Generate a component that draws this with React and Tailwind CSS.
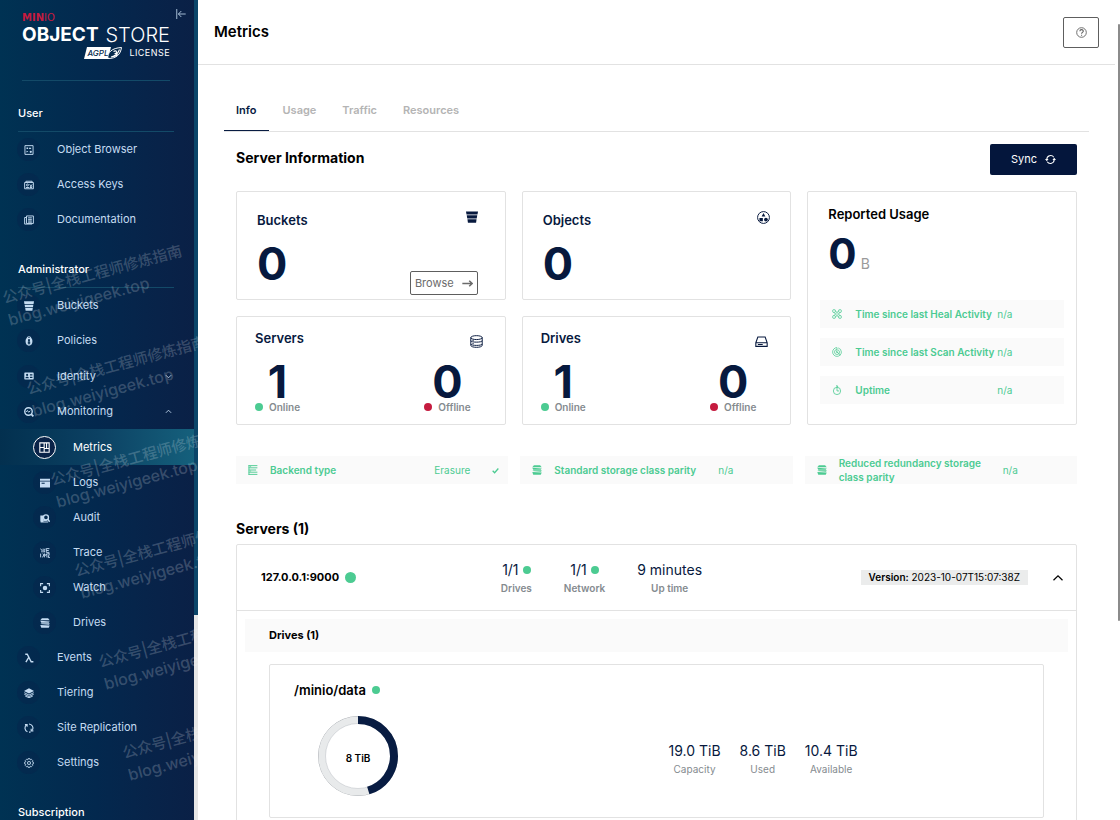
import React from "react";

const Svg = ({ size = 10, box = 16, className = "", children }) => (
  <svg
    width={size}
    height={size}
    viewBox={`0 0 ${box} ${box}`}
    fill="none"
    stroke="currentColor"
    strokeWidth="1.5"
    aria-hidden="true"
    className={`shrink-0 ${className}`}
  >
    {children}
  </svg>
);

const BucketIcon = (p) => (
  <Svg {...p}>
    <g fill="currentColor" stroke="none">
      <path d="M0 .5h16l-.7 4.300H.7z" />
      <path d="M1 5.800h14l-.7 4.200H1.700z" />
      <path d="M1.900 11h12.200l-.7 4.500H2.600z" />
    </g>
  </Svg>
);
const BrowserIcon = (p) => (
  <Svg {...p}>
    <path d="M1.500 1h13v14h-13z" />
    <g fill="currentColor" stroke="none">
      <path d="M4 4h2.500v2.500H4zM9.500 3.500l2.500 3H7.500zM4 9l3 1.500L4 12z" />
      <circle cx="10.800" cy="10.800" r="1.800" />
    </g>
  </Svg>
);
const AccessIcon = (p) => (
  <Svg {...p}>
    <path d="M1 4h14v10H1zM3 4V2h10v2" />
    <circle cx="5.500" cy="8" r="1.600" />
    <path d="M3 12h5M9 7l4 4M13 7l-3 4M9 12h4" />
  </Svg>
);
const DocsIcon = (p) => (
  <Svg {...p}>
    <path d="M4 1.500h11v12H4zM4 4H1v10.500h12M6.500 4.500h6M6.500 7h6M6.500 9.500h6M6.500 11.500h6" />
  </Svg>
);
const PolicyIcon = (p) => (
  <Svg {...p}>
    <path
      fill="currentColor"
      stroke="none"
      fillRule="evenodd"
      d="M8 .5c2 0 3.300 1.200 3.600 2.800C13 4.500 13.500 6.500 13.500 8.500c0 4-2 7-5.500 7s-5.500-3-5.500-7c0-2 .5-4 1.900-5.200C4.700 1.700 6 .5 8 .5zM8 2c-1 0-1.700.5-2 1.200h4C9.700 2.500 9 2 8 2zM8 5a1.600 1.600 0 0 0-1 2.900v1.400H6v1.500h1v1H6v1.500h4v-1.500H9v-1h1V9.300H9V7.900A1.600 1.600 0 0 0 8 5z"
    />
  </Svg>
);
const IdentityIcon = (p) => (
  <Svg {...p}>
    <path
      fill="currentColor"
      stroke="none"
      fillRule="evenodd"
      d="M1.500 2.500h13a1 1 0 0 1 1 1v9a1 1 0 0 1-1 1h-13a1 1 0 0 1-1-1v-9a1 1 0 0 1 1-1zM5 4.500a1.700 1.700 0 1 0 0 3.400 1.700 1.700 0 0 0 0-3.400zM2.300 11.500h5.400c0-3-5.400-3-5.400 0zM9.500 5v2h4V5zM9.500 9v2h4V9z"
    />
  </Svg>
);
const MonitoringIcon = (p) => (
  <Svg {...p}>
    <circle cx="7.200" cy="7.200" r="6" strokeWidth="2.200" />
    <path d="M11.500 11.500l3.500 3.500" strokeWidth="3" />
    <path d="M3.500 8l2-2.500 2 3L10 6" />
  </Svg>
);
const MetricsIcon = (p) => (
  <Svg {...p}>
    <path d="M1.200 1.200h13.600v13.600H1.200zM7.500 1.200v13.600M1.200 8h6.300M7.500 9.500h7.300M11 1.200v8.300" strokeWidth="1.600" />
  </Svg>
);
const LogsIcon = (p) => (
  <Svg {...p}>
    <path fill="currentColor" stroke="none" fillRule="evenodd" d="M0 1h16v3.200H0zM0 5.500h16V15H0zM2.500 7.500v1.500h5V7.500z" />
  </Svg>
);
const AuditIcon = (p) => (
  <Svg {...p}>
    <path fill="currentColor" stroke="none" d="M0.500 4h5v9.500h-5zM1 13.500h12V15H1z" />
    <circle cx="9.500" cy="7" r="4" strokeWidth="2.200" />
    <path d="M12.500 10l3 4" strokeWidth="2.400" />
    <path d="M5 12h6" />
  </Svg>
);
const TraceIcon = (p) => (
  <Svg {...p}>
    <path
      d="M1 1l2 3v3M5 1v6M8 1l-1 3v3M10 1v6h5M10 4h4M10 1h5M1 9v6M4 9l2 2-2 4M7 15V9l2 3 2-3v6M12 9h3l-2 6h3"
      strokeWidth="1.500"
    />
  </Svg>
);
const WatchIcon = (p) => (
  <Svg {...p}>
    <path d="M1 5V1h4M11 1h4v4M15 11v4h-4M5 15H1v-4" strokeWidth="1.800" />
    <circle cx="8" cy="8" r="3.600" fill="currentColor" stroke="none" />
  </Svg>
);
const DrivesStackIcon = (p) => (
  <Svg {...p}>
    <g fill="currentColor" stroke="none">
      <path d="M3 .5h10l2.500 3H.5z" />
      <path d="M.5 4.500l15 1-1.500 2H2z" />
      <path d="M3 8.300h12.500l-1 2.500L.5 9.500z" />
      <path d="M.5 11.300l15 .7-1.500 3.500H2z" />
    </g>
  </Svg>
);
const LambdaIcon = (p) => (
  <Svg {...p}>
    <path d="M2 2h3.200l6.300 12H15M7.600 7L3 14.500" strokeWidth="2.200" />
  </Svg>
);
const TieringIcon = (p) => (
  <Svg {...p}>
    <path d="M8 .5l8 4.200-8 4.200-8-4.200z" fill="currentColor" stroke="none" />
    <path d="M.5 7.500L8 11.300l7.500-3.800M.5 10L8 13.700l7.500-3.700M2 13l6 2.500 6-2.500" />
  </Svg>
);
const ReplicationIcon = (p) => (
  <Svg {...p}>
    <path
      d="M5.500 14A6.500 6.500 0 0 1 4 3M1.500 2.500H5v3.500M8 1.500a6.500 6.500 0 0 1 5.500 9.500M15 12.500h-3.500V9M8 14.500h2.500"
      strokeWidth="1.800"
    />
  </Svg>
);
const SettingsIcon = (p) => (
  <Svg {...p}>
    <path
      d="M6.500 1h3l.5 2 1.800-1 2.100 2.100L13 6l2 .5v3l-2 .5.900 1.900-2.100 2.100-1.800-1-.5 2h-3L6 13l-1.900 1L2 11.900 3 10l-2-.5v-3L3 6 2 4.100 4.100 2 6 3z"
      strokeWidth="1.300"
    />
    <circle cx="8" cy="8" r="2.600" strokeWidth="1.300" />
    <circle cx="8" cy="8" r="0.500" fill="currentColor" strokeWidth="0.500" />
  </Svg>
);
const Chevron = ({ up, size = 7, thin }) => (
  <Svg size={size}>
    <path d={up ? "M2 11l6-6 6 6" : "M2 5l6 6 6-6"} strokeWidth={thin ? "1.600" : "2"} />
  </Svg>
);
const CollapseIcon = () => (
  <Svg size={10}>
    <path d="M1.200 0v16M15.500 8H4M8.500 3.200L3.800 8l4.700 4.800" strokeWidth="1.300" />
  </Svg>
);
const HelpIcon = () => (
  <Svg size={11}>
    <circle cx="8" cy="8" r="7" strokeWidth="1.300" />
    <path d="M5.600 6.300c0-3.400 5-3.200 5-.2 0 1.700-2.500 1.900-2.500 3.700M8.100 11.200v1.500" />
  </Svg>
);
const SyncIcon = () => (
  <Svg size={11}>
    <path d="M2.600 8A5.600 5.600 0 0 1 12.800 4.800M13.400 8A5.600 5.600 0 0 1 3.200 11.200" />
    <path d="M0 7.200h5.200L2.600 10.500zM16 8.800h-5.200L13.400 5.500z" fill="currentColor" stroke="none" />
  </Svg>
);
const ArrowIcon = () => (
  <Svg size={11}>
    <path d="M.5 8h14M10.500 4L14.800 8l-4.300 4" strokeWidth="2.200" />
  </Svg>
);
const ObjectsIcon = () => (
  <Svg size={13}>
    <circle cx="8" cy="8" r="7.300" strokeWidth="1.200" />
    <g fill="currentColor" stroke="none">
      <path d="M8 2.500l2.300 4.300H5.700zM3 8.500h4.200v4H3z" />
      <circle cx="11" cy="10.500" r="2.300" />
    </g>
  </Svg>
);
const DatabaseIcon = () => (
  <Svg size={13}>
    <ellipse cx="8" cy="3.200" rx="7" ry="2.400" strokeWidth="1.200" />
    <path
      d="M1 3.200v9.500c0 3.300 14 3.300 14 0V3.200M1 7c0 2.400 14 2.400 14 0M1 11c0 2.400 14 2.400 14 0M3 6.600h1.500M3 10.600h1.500"
      strokeWidth="1.200"
    />
  </Svg>
);
const DriveIcon = () => (
  <Svg size={13}>
    <path d="M1 9.500L3.500 2.500h9L15 9.500V14H1zM1 9.500h14M3.500 11.800h6" strokeWidth="1.300" />
  </Svg>
);
const HealIcon = () => (
  <Svg size={10}>
    <rect x="1" y="1" width="4.500" height="4.500" rx="1.800" strokeWidth="1.300" />
    <rect x="10.500" y="1" width="4.500" height="4.500" rx="1.800" strokeWidth="1.300" />
    <rect x="1" y="10.500" width="4.500" height="4.500" rx="1.800" strokeWidth="1.300" />
    <rect x="10.500" y="10.500" width="4.500" height="4.500" rx="1.800" strokeWidth="1.300" />
    <path d="M5 2.500l8.500 8.500M2.500 5l8.500 8.500M11 2.500L2.500 11M13.500 5L5 13.500" strokeWidth="1.100" />
  </Svg>
);
const ScanIcon = () => (
  <Svg size={10}>
    <path
      d="M8 1a7 7 0 1 0 7 7M8 4a4 4 0 1 0 4 4M8 7a1 1 0 1 0 1 1M8 1v7l5.500 5M10 1.500A7 7 0 0 1 15 8M9.500 4.500A4 4 0 0 1 12 8"
      strokeWidth="1.200"
    />
  </Svg>
);
const UptimeIcon = () => (
  <Svg size={10}>
    <circle cx="8" cy="9.500" r="5.800" strokeWidth="1.300" />
    <path d="M8 .5v9h3.500M7 1l3 2" strokeWidth="1.300" />
  </Svg>
);
const BackendIcon = () => (
  <Svg size={10}>
    <path d="M1.500 0v16M1 1h14M1 4.500h14M1 8h12M1 11.500h14M1 15h14" strokeWidth="1.500" />
    <path d="M3 2.700h2M3 9.700h2" strokeWidth="1.200" />
  </Svg>
);
const CheckIcon = () => (
  <Svg size={7}>
    <path d="M1.500 8.500l4.500 4.500L14.500 3.500" strokeWidth="3" />
  </Svg>
);

function AgplBadge() {
  return (
    <span className="relative flex h-3 w-[38px] items-center">
      <svg viewBox="0 0 38 12" className="absolute inset-0 h-full w-full" aria-hidden="true">
        <path d="M3 0h24l-3 12H0z" fill="#fff" />
        <path d="M24 11.500C23 5.500 28 1 37.500.5c-1 7-5 11-13.500 11z" fill="#062a4c" stroke="#fff" strokeWidth="1" />
        <path d="M27 10c4-1 7-3.500 8.500-7.500M29.500 4.500c3-1.500 4 .5 2 2 3 0 2 3-2 3" fill="none" stroke="#fff" strokeWidth="1.100" />
      </svg>
      <span className="relative pl-[3px] text-[8px] leading-3 font-medium italic text-[#062a4c]">AGPL</span>
    </span>
  );
}

function NavItem({ icon: Icon, label, sub, active, tall, expand }) {
  return (
    <a
      href="#"
      aria-current={active ? "page" : undefined}
      className={`flex items-center ${active || tall ? "h-9" : "h-[35px]"} ${
        active ? "bg-linear-to-r from-[#03304f] via-[#0c4163] to-[#15607c] text-white" : "text-[#c5dcf2]"
      } ${sub ? "pl-[33px]" : "pl-[17px]"}`}
    >
      <span
        className={`flex size-[23px] items-center justify-center rounded-full ${
          active ? "border border-white bg-[#0a2348]" : "bg-[#07234a]/40"
        }`}
      >
        <Icon size={active ? 11 : 10} />
      </span>
      <span className="ml-[17px] text-[11px]">{label}</span>
      {expand && (
        <span className="mr-5 ml-auto flex size-3 items-center justify-center">
          <Chevron up={expand === "open"} />
        </span>
      )}
    </a>
  );
}

function NavHeading({ children }) {
  return (
    <h2 className="mt-6 mr-5 ml-[18px] border-b border-[#134a68] pb-[10px] text-[11px] leading-4 font-medium text-white">
      {children}
    </h2>
  );
}

const MARKS = [0, 1, 2, 3, 4, 5];

function Sidebar() {
  return (
    <aside className="relative flex h-full w-[198px] shrink-0 overflow-hidden">
      <div className="min-w-0 flex-1 overflow-hidden bg-linear-to-r from-[#003253] via-[#03284e] to-[#0a2046]">
        <div className="relative mr-6 ml-[22px] flex h-[81px] flex-col border-b border-[#134a68] pt-[14px]">
          <div className="font-['DejaVu_Sans'] text-[10px] leading-2 text-[#c51b3f]">
            <b>MIN</b>IO
          </div>
          <div className="mt-px flex items-center justify-between text-[19px] leading-6 whitespace-nowrap text-white">
            <span className="font-bold">OBJECT</span>
            <span className="text-xl leading-6 font-light">STORE</span>
          </div>
          <div className="flex items-center justify-end gap-[7px] text-white">
            <AgplBadge />
            <span className="text-[9px] leading-3 tracking-wider">LICENSE</span>
          </div>
        </div>
        <button type="button" aria-label="Collapse menu" className="absolute top-[9px] left-[176px] text-[#c5dcf2]">
          <CollapseIcon />
        </button>
        <nav>
          <NavHeading>User</NavHeading>
          <NavItem icon={BrowserIcon} label="Object Browser" />
          <NavItem icon={AccessIcon} label="Access Keys" />
          <NavItem icon={DocsIcon} label="Documentation" />
          <NavHeading>Administrator</NavHeading>
          <NavItem icon={BucketIcon} label="Buckets" />
          <NavItem icon={PolicyIcon} label="Policies" />
          <NavItem tall icon={IdentityIcon} label="Identity" expand="closed" />
          <NavItem icon={MonitoringIcon} label="Monitoring" expand="open" />
          <NavItem sub active icon={MetricsIcon} label="Metrics" />
          <NavItem sub icon={LogsIcon} label="Logs" />
          <NavItem sub icon={AuditIcon} label="Audit" />
          <NavItem sub icon={TraceIcon} label="Trace" />
          <NavItem sub icon={WatchIcon} label="Watch" />
          <NavItem sub icon={DrivesStackIcon} label="Drives" />
          <NavItem icon={LambdaIcon} label="Events" />
          <NavItem icon={TieringIcon} label="Tiering" />
          <NavItem icon={ReplicationIcon} label="Site Replication" />
          <NavItem icon={SettingsIcon} label="Settings" />
          <NavHeading>Subscription</NavHeading>
        </nav>
      </div>
      <div className="w-1 bg-[#e6e6e6]">
        <div className="h-3/4 bg-[#0b4569]" />
      </div>
      <div className="pointer-events-none absolute inset-0 select-none overflow-hidden" aria-hidden="true">
        {MARKS.map((i) => (
          <div
            key={i}
            className="absolute origin-top-left -rotate-[15deg] font-['Inter','Noto_Sans_CJK_SC',sans-serif] text-[15px] leading-[21px] font-medium whitespace-nowrap text-white/20"
            style={{ left: i * 24, top: 288 + i * 91 }}
          >
            公众号|全栈工程师修炼指南
            <br />
            <span className="text-base">blog.weiyigeek.top</span>
          </div>
        ))}
      </div>
    </aside>
  );
}

const Dot = ({ className = "size-2 bg-[#4ccb92]" }) => (
  <span className={`inline-block shrink-0 rounded-full ${className}`} />
);

function CountCard({ title, icon, action }) {
  return (
    <section className="flex h-[109px] justify-between rounded-xs border border-[#e2e2e2] pr-[27px] pl-5">
      <div className="pt-5">
        <h3 className="text-[13px] leading-4 font-semibold">{title}</h3>
        <p className="mt-3 text-[45px] leading-12 font-bold">0</p>
      </div>
      <div className="flex flex-col items-end justify-between pt-[19px] pb-1">
        <span className={action ? "" : "-mr-[7px]"}>{icon}</span>
        {action}
      </div>
    </section>
  );
}

function StatusCount({ value, label, dotClass }) {
  return (
    <div className="text-center">
      <p className="text-[45px] leading-12 font-bold">{value}</p>
      <p className="-mt-[5px] flex items-center gap-[6px] text-[10px] leading-3 font-semibold text-[#858b8f]">
        <Dot className={dotClass} />
        {label}
      </p>
    </div>
  );
}

function StatusCard({ title, icon }) {
  return (
    <section className="flex h-[109px] flex-col rounded-xs border border-[#e2e2e2] pt-[13px] pr-[22px] pl-[18px]">
      <div className="flex h-5 items-start justify-between">
        <h3 className="text-[13px] leading-4 font-semibold">{title}</h3>
        <span className="pt-[5px]">{icon}</span>
      </div>
      <div className="mt-2 flex justify-between pr-3">
        <StatusCount value="1" label="Online" dotClass="size-2 bg-[#4ccb92]" />
        <StatusCount value="0" label="Offline" dotClass="size-2 bg-[#c51b3f]" />
      </div>
    </section>
  );
}

function UsageRow({ icon, label }) {
  return (
    <div className="flex h-7 items-center bg-[#fafafa] pl-3 text-[10px] text-[#4ccb92]">
      {icon}
      <span className="ml-[13px] w-[142px] font-semibold whitespace-nowrap">{label}</span>
      <span>n/a</span>
    </div>
  );
}

function Stat({ value, label, dot, bold }) {
  return (
    <div className="text-center">
      <div className="flex items-center justify-center gap-1 text-sm leading-5">
        {value}
        {dot && <Dot />}
      </div>
      <div className={`text-[10px] leading-4 text-[#858b8f] ${bold ? "font-semibold" : ""}`}>{label}</div>
    </div>
  );
}

function UsageRing({ used }) {
  const len = 2 * Math.PI * 36;
  return (
    <div className="relative size-20">
      <svg viewBox="0 0 80 80" className="size-full -rotate-90" fill="none" aria-hidden="true">
        <circle cx="40" cy="40" r="39.500" stroke="#a9adb2" strokeWidth="1" />
        <circle cx="40" cy="40" r="36" stroke="#e8eaeb" strokeWidth="7" />
        <circle cx="40" cy="40" r="32.500" stroke="#b9bdc2" strokeWidth="0.500" />
        <circle cx="40" cy="40" r="36" stroke="#081c42" strokeWidth="8" strokeDasharray={`${len * used} ${len}`} />
      </svg>
      <span className="absolute inset-0 flex items-center justify-center pt-1 text-[10px] font-semibold text-black">
        8 TiB
      </span>
    </div>
  );
}

function Tab({ label, active }) {
  return (
    <button
      type="button"
      role="tab"
      aria-selected={!!active}
      className={`h-10 border-b px-3 text-[11px] font-semibold ${
        active ? "border-[#081c42] text-[#081c42]" : "border-transparent text-[#b4b4b4]"
      }`}
    >
      {label}
    </button>
  );
}

function Strip({ children }) {
  return (
    <div className="flex h-7 items-center bg-[#fafafa] pl-3 text-[10px] leading-[14px] text-[#4ccb92]">{children}</div>
  );
}

export default function App() {
  return (
    <div className="flex h-screen overflow-hidden bg-white font-['Inter','Liberation_Sans',sans-serif] text-[#07193e]">
      <Sidebar />
      <div className="min-w-0 flex-1 overflow-y-auto [scrollbar-width:none]">
        <header className="flex h-[65px] items-center justify-between border-b border-[#e2e2e2] px-4">
          <h1 className="text-[15px] font-semibold text-black">Metrics</h1>
          <button
            type="button"
            aria-label="Help"
            className="flex h-[31px] w-9 items-center justify-center rounded-xs border border-[#5e5e5e] text-[#5e5e5e]"
          >
            <HelpIcon />
          </button>
        </header>
        <main className="px-[26px] pt-[26px]">
          <div role="tablist" className="flex gap-0.5 border-b border-[#e2e2e2]">
            <Tab label="Info" active />
            <Tab label="Usage" />
            <Tab label="Traffic" />
            <Tab label="Resources" />
          </div>
          <div className="px-3">
            <div className="mt-3 flex items-start justify-between">
              <h2 className="text-sm leading-7 font-bold text-black">Server Information</h2>
              <button
                type="button"
                className="flex h-[31px] w-[87px] items-center justify-center gap-2 rounded-xs bg-[#04163c] text-[11px] text-white"
              >
                Sync
                <SyncIcon />
              </button>
            </div>

            <div className="mt-4 grid grid-cols-3 gap-4">
              <CountCard
                title="Buckets"
                icon={<BucketIcon size={12} />}
                action={
                  <a
                    href="#"
                    className="flex h-6 items-center gap-2 rounded-xs border border-[#5e5e5e] px-1 text-[11px] text-[#6b6b6b]"
                  >
                    Browse
                    <ArrowIcon />
                  </a>
                }
              />
              <CountCard title="Objects" icon={<ObjectsIcon />} />
              <section className="row-span-2 rounded-xs border border-[#e2e2e2] px-3 pt-[14px]">
                <h3 className="pl-2 text-[13px] leading-4 font-semibold text-black">Reported Usage</h3>
                <p className="mt-2 flex items-baseline gap-1 pl-2 text-[42px] leading-12 font-bold">
                  0<span className="text-sm font-normal text-[#9a9a9a]">B</span>
                </p>
                <div className="mt-[22px] flex flex-col gap-[10px]">
                  <UsageRow icon={<HealIcon />} label="Time since last Heal Activity" />
                  <UsageRow icon={<ScanIcon />} label="Time since last Scan Activity" />
                  <UsageRow icon={<UptimeIcon />} label="Uptime" />
                </div>
              </section>
              <StatusCard title="Servers" icon={<DatabaseIcon />} />
              <StatusCard title="Drives" icon={<DriveIcon />} />
            </div>

            <div className="mt-[31px] grid grid-cols-3 gap-3">
              <Strip>
                <BackendIcon />
                <b className="ml-3 flex-1 font-semibold">Backend type</b>
                <span className="w-[58px]">Erasure</span>
                <span className="w-4">
                  <CheckIcon />
                </span>
              </Strip>
              <Strip>
                <DrivesStackIcon size={10} />
                <b className="ml-3 w-[164px] font-semibold">Standard storage class parity</b>
                <span>n/a</span>
              </Strip>
              <Strip>
                <DrivesStackIcon size={10} />
                <b className="ml-3 w-[164px] pr-4 font-semibold">Reduced redundancy storage class parity</b>
                <span>n/a</span>
              </Strip>
            </div>

            <h2 className="mt-[35px] text-sm leading-5 font-bold text-black">Servers (1)</h2>
            <section className="mt-[5px] h-72 rounded-xs border border-[#e2e2e2]">
              <div className="flex h-[66px] items-center border-b border-[#e2e2e2] pr-3 pl-6">
                <div className="flex flex-1 items-center gap-[6px] text-[11px] font-bold text-black">
                  127.0.0.1:9000
                  <Dot className="size-[11px] bg-[#4ccb92]" />
                </div>
                <div className="flex flex-[1.5] items-center gap-8">
                  <Stat value="1/1" label="Drives" dot bold />
                  <Stat value="1/1" label="Network" dot bold />
                  <Stat value="9 minutes" label="Up time" bold />
                </div>
                <div className="bg-[#ebecec] px-2 text-[10px] leading-[15px] text-black">
                  <b className="font-semibold">Version:</b> 2023-10-07T15:07:38Z
                </div>
                <button type="button" aria-label="Collapse server" className="ml-6 flex w-3 justify-center text-black">
                  <Chevron up thin size={12} />
                </button>
              </div>
              <div className="mx-2 mt-2">
                <h3 className="h-[33px] bg-[#fafafa] pl-6 text-[11px] leading-[33px] font-bold text-black">
                  Drives (1)
                </h3>
                <section className="mx-6 mt-3 h-[154px] rounded-xs border border-[#e2e2e2] px-6 pt-[15px]">
                  <h4 className="flex items-center gap-[6px] text-[13px] leading-5 font-semibold text-black">
                    /minio/data
                    <Dot />
                  </h4>
                  <div className="mt-4 grid grid-cols-2 items-center pl-6">
                    <UsageRing used={0.453} />
                    <div className="flex gap-[19px] pt-[6px]">
                      <Stat value="19.0 TiB" label="Capacity" />
                      <Stat value="8.6 TiB" label="Used" />
                      <Stat value="10.4 TiB" label="Available" />
                    </div>
                  </div>
                </section>
              </div>
            </section>
          </div>
        </main>
      </div>
      <div className="flex w-[5px] shrink-0 justify-end pt-6">
        <div className="h-3/4 w-[2px] rounded-full bg-[#8b8b8b]" />
      </div>
    </div>
  );
}
